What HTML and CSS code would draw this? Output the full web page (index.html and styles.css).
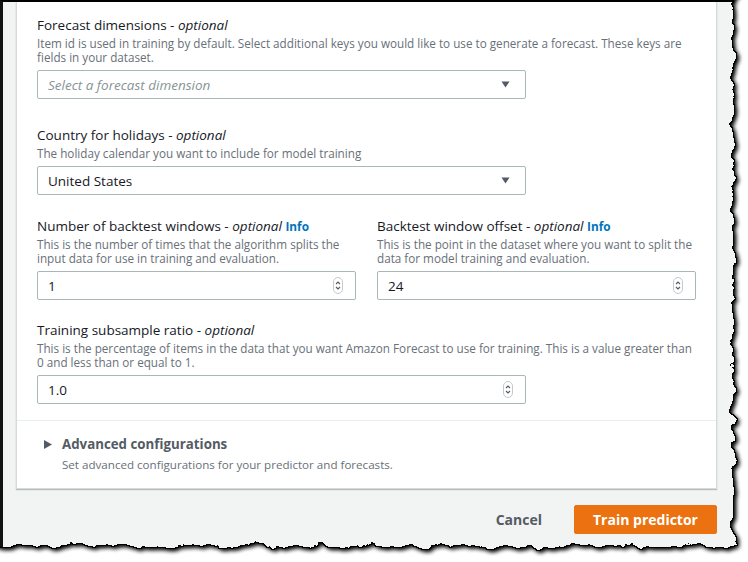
FILE: index.html
```html
<!DOCTYPE html>
<html lang="en">
<head>
<meta charset="utf-8">
<title>Train predictor</title>
<link rel="stylesheet" href="styles.css">
</head>
<body>
<div class="frame">
  <div class="page">
    <div class="card">
      <div class="card-body">
        <div class="field">
          <div class="label">Forecast dimensions - <em>optional</em></div>
          <div class="desc">Item id is used in training by default. Select additional keys you would like to use to generate a forecast. These keys are fields in your dataset.</div>
          <div class="control select">
            <span class="placeholder">Select a forecast dimension</span>
            <svg class="caret" width="9" height="7" viewBox="0 0 9 7"><path d="M0.5 0.5 H8.5 L4.5 6.5 Z" fill="#545b64"/></svg>
          </div>
        </div>

        <div class="field field-gap-lg">
          <div class="label">Country for holidays - <em>optional</em></div>
          <div class="desc">The holiday calendar you want to include for model training</div>
          <div class="control select">
            <span class="value">United States</span>
            <svg class="caret" width="9" height="7" viewBox="0 0 9 7"><path d="M0.5 0.5 H8.5 L4.5 6.5 Z" fill="#545b64"/></svg>
          </div>
        </div>

        <div class="row field-gap-md">
          <div class="field">
            <div class="label">Number of backtest windows - <em>optional</em> <a class="info">Info</a></div>
            <div class="desc">This is the number of times that the algorithm splits the input data for use in training and evaluation.</div>
            <div class="control number">
              <span class="value">1</span>
              <svg class="spin" width="10" height="17" viewBox="0 0 10 17"><rect x="0.5" y="0.5" width="9" height="16" rx="4.5" fill="#fff" stroke="#c3c9ca"/><path d="M3 7 L5 5 L7 7" stroke="#545b64" stroke-width="1.1" fill="none"/><path d="M3 10 L5 12 L7 10" stroke="#545b64" stroke-width="1.1" fill="none"/></svg>
            </div>
          </div>
          <div class="field">
            <div class="label">Backtest window offset - <em>optional</em> <a class="info">Info</a></div>
            <div class="desc">This is the point in the dataset where you want to split the data for model training and evaluation.</div>
            <div class="control number">
              <span class="value">24</span>
              <svg class="spin" width="10" height="17" viewBox="0 0 10 17"><rect x="0.5" y="0.5" width="9" height="16" rx="4.5" fill="#fff" stroke="#c3c9ca"/><path d="M3 7 L5 5 L7 7" stroke="#545b64" stroke-width="1.1" fill="none"/><path d="M3 10 L5 12 L7 10" stroke="#545b64" stroke-width="1.1" fill="none"/></svg>
            </div>
          </div>
        </div>

        <div class="field field-gap-sm">
          <div class="label">Training subsample ratio - <em>optional</em></div>
          <div class="desc">This is the percentage of items in the data that you want Amazon Forecast to use for training. This is a value greater than 0 and less than or equal to 1.</div>
          <div class="control number select">
            <span class="value">1.0</span>
            <svg class="spin" width="10" height="17" viewBox="0 0 10 17"><rect x="0.5" y="0.5" width="9" height="16" rx="4.5" fill="#fff" stroke="#c3c9ca"/><path d="M3 7 L5 5 L7 7" stroke="#545b64" stroke-width="1.1" fill="none"/><path d="M3 10 L5 12 L7 10" stroke="#545b64" stroke-width="1.1" fill="none"/></svg>
          </div>
        </div>
      </div>

      <div class="expander">
        <div class="exp-head">
          <svg class="exp-arrow" width="8" height="9" viewBox="0 0 8 9"><path d="M0 0 L8 4.5 L0 9 Z" fill="#545b64"/></svg>
          <span class="exp-title">Advanced configurations</span>
        </div>
        <div class="exp-desc">Set advanced configurations for your predictor and forecasts.</div>
      </div>
    </div>

    <div class="footer">
      <button class="btn-link">Cancel</button>
      <button class="btn-primary">Train predictor</button>
    </div>
  </div>

  <svg class="torn" width="748" height="562" viewBox="0 0 748 562" aria-hidden="true">
    <defs>
      <filter id="tear" filterUnits="userSpaceOnUse" x="-40" y="-40" width="840" height="660" color-interpolation-filters="sRGB">
        <feTurbulence type="fractalNoise" baseFrequency="0.06" numOctaves="4" seed="7" result="noise"/>
        <feDisplacementMap in="SourceGraphic" in2="noise" scale="13" xChannelSelector="R" yChannelSelector="G" result="outside"/>
        <feColorMatrix in="outside" type="matrix" values="0 0 0 0 0  0 0 0 0 0  0 0 0 0 0  0 0 0 -1 1" result="paper"/>
        <feMorphology in="paper" operator="dilate" radius="1" result="edge"/>
        <feGaussianBlur in="paper" stdDeviation="2.4" result="blur"/>
        <feOffset in="blur" dx="2" dy="2" result="shadow"/>
        <feMerge result="dark"><feMergeNode in="shadow"/><feMergeNode in="shadow"/><feMergeNode in="edge"/></feMerge>
        <feComposite in="dark" in2="outside" operator="in" result="darkOut"/>
        <feMerge><feMergeNode in="outside"/><feMergeNode in="darkOut"/></feMerge>
      </filter>
    </defs>
    <path d="M733 -40 L800 -40 L800 620 L-40 620 L-40 546 L733 546 Z" fill="#fff" filter="url(#tear)"/>
  </svg>
</div>
</body>
</html>
```
FILE: styles.css
```css
* { box-sizing: border-box; }

body {
  margin: 0;
  background: #ffffff;
  font-family: "Open Sans", "Liberation Sans", Arial, sans-serif;
  color: #16191f;
}

.frame {
  position: relative;
  width: 748px;
  height: 562px;
  overflow: hidden;
}

.page {
  height: 562px;
  background: #f2f3f3;
  border-top: 2px solid #000;
  border-left: 3px solid #111;
  padding-left: 13px;
}

.card {
  width: 701px;
  background: #ffffff;
  border: 1px solid #d5dbdb;
  border-top: 0;
  box-shadow: 0 1px 1px rgba(0, 28, 36, 0.25);
}

.card-body {
  padding: 13px 20px 16px;
}

.field-gap-lg { margin-top: 26px; }
.field-gap-md { margin-top: 21px; }
.field-gap-sm { margin-top: 20px; }

.row {
  display: grid;
  grid-template-columns: 319px 319px;
  column-gap: 21px;
}

.label {
  font-size: 13.5px;
  line-height: 20px;
  color: #16191f;
}

.label em {
  font-style: italic;
}

.info {
  color: #0073bb;
  font-weight: 700;
  font-size: 11.8px;
}

.desc {
  margin-top: 1px;
  font-size: 11.7px;
  line-height: 14px;
  color: #687078;
}

.control {
  margin-top: 6px;
  height: 29px;
  border: 1px solid #aab7b8;
  border-radius: 2px;
  display: flex;
  align-items: center;
  padding: 0 15px 0 10px;
  font-size: 13.5px;
  color: #16191f;
  background: #fff;
}

.control.select {
  width: 489px;
}

.control.number {
  padding-right: 12px;
}

.placeholder {
  color: #879596;
  font-style: italic;
}

.caret,
.spin {
  margin-left: auto;
  display: block;
}

.expander {
  border-top: 1px solid #eaeded;
  padding: 13px 20px 15px 27px;
}

.exp-head {
  display: flex;
  align-items: center;
  height: 20px;
}

.exp-arrow {
  display: block;
  margin-right: 10px;
}

.exp-title {
  font-size: 13.3px;
  font-weight: 700;
  color: #545b64;
}

.exp-desc {
  margin-top: 3px;
  margin-left: 18px;
  font-size: 11.6px;
  line-height: 16px;
  color: #687078;
}

.footer {
  width: 701px;
  margin-top: 16px;
  display: flex;
  justify-content: flex-end;
  align-items: center;
  gap: 12px;
}

.btn-link,
.btn-primary {
  font-family: inherit;
  font-size: 14px;
  font-weight: 700;
  height: 29px;
  border-radius: 2px;
  cursor: pointer;
}

.btn-link {
  background: transparent;
  border: 0;
  color: #545b64;
  padding: 0 20px;
}

.btn-primary {
  width: 143px;
  background: #ec7211;
  border: 1px solid #ec7211;
  color: #ffffff;
  padding: 0;
}

.torn {
  position: absolute;
  top: 0;
  left: 0;
  pointer-events: none;
}
```
